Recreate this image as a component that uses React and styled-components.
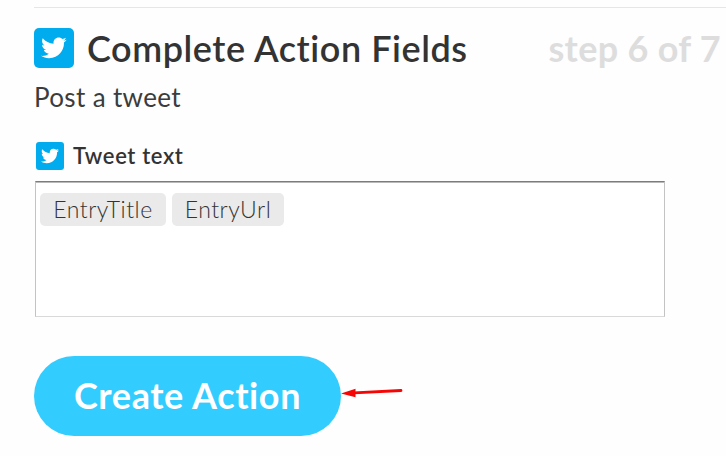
import styled, {createGlobalStyle} from "styled-components";
import {FaTwitter} from "react-icons/fa";

const GlobalStyle = createGlobalStyle`
  * {
    box-sizing: border-box;
  }
  body {
    margin: 0;
    background-color: #fefefe;
    color: #333;
    font-family: Lato, "Open Sans", sans-serif;
    font-variant-ligatures: none;
    overflow: hidden;
  }
`;
const Page = styled.main`
  height: 456px;
  padding: 7px 0 0 34px;
`;
const Header = styled.header`
  display: flex;
  align-items: center;
  border-top: 1px solid #e6e6e6;
  padding: 19px 5px 0 0;
  white-space: nowrap;
`;
const Badge = styled.span`
  display: flex;
  flex-shrink: 0;
  align-items: center;
  justify-content: center;
  width: ${props => props.$size}px;
  height: ${props => props.$size}px;
  border-radius: ${props => props.$size > 30 ? 5 : 3}px;
  background-color: #00aced;
  color: #fff;
  svg {
    width: 64%;
    height: 64%;
  }
`;
const Title = styled.h1`
  margin: 0 0 0 13px;
  font-size: 36px;
  line-height: 42px;
  font-weight: 600;
  letter-spacing: 0.56px;
`;
const Step = styled.span`
  margin-left: auto;
  color: #ddd;
  font-size: 36px;
  line-height: 42px;
  font-weight: 700;
  letter-spacing: 0.3px;
`;
const Subtitle = styled.p`
  margin: 11px 0 0;
  color: #3c3c3c;
  font-size: 26px;
  line-height: 34px;
  font-weight: 400;
  letter-spacing: 0.35px;
`;
const Label = styled.div`
  display: flex;
  align-items: center;
  gap: 9px;
  margin: 27px 0 0 2px;
  font-size: 22px;
  line-height: 30px;
  font-weight: 600;
  letter-spacing: 0.65px;
`;
const TokenField = styled.div`
  display: flex;
  align-items: flex-start;
  gap: 6px;
  width: 630px;
  height: 136px;
  margin: 10px 0 0 1px;
  padding: 11px 4px;
  border: 1px solid #c3c3c3;
  border-top-color: #7c7c7c;
  border-bottom-color: #d9d9d9;
  background-color: #fff;
  box-shadow: inset 0 1px 0 #b9b9b9;
`;
const Token = styled.span`
  width: ${props => props.$width}px;
  height: 33px;
  border-radius: 5px;
  background-color: #eaeaea;
  font-size: 23px;
  line-height: 32px;
  font-weight: 300;
  letter-spacing: 0.5px;
  text-align: center;
`;
const Actions = styled.div`
  display: flex;
  margin-top: 39px;
`;
const Button = styled.button`
  width: 307px;
  height: 80px;
  padding: 0 0 2px;
  border: 0;
  border-radius: 40px;
  background-color: #3cf;
  color: #fff;
  font-family: inherit;
  font-size: 36px;
  line-height: 78px;
  font-weight: 700;
  letter-spacing: 0.6px;
`;
const Arrow = styled.svg`
  width: 64px;
  height: 20px;
  margin-top: 28px;
`;

export default function App() {
  return (
    <>
      <GlobalStyle />
      <Page>
        <Header>
          <Badge $size={40}><FaTwitter /></Badge>
          <Title>Complete Action Fields</Title>
          <Step>step 6 of 7</Step>
        </Header>
        <Subtitle>Post a tweet</Subtitle>
        <Label>
          <Badge $size={28}><FaTwitter /></Badge>
          Tweet text
        </Label>
        <TokenField>
          <Token $width={126}>EntryTitle</Token>
          <Token $width={112}>EntryUrl</Token>
        </TokenField>
        <Actions>
          <Button>Create Action</Button>
          <Arrow viewBox="0 0 64 20">
            <path d="M13 8.8L60 6.5" stroke="#f60505" strokeWidth="2.8" strokeLinecap="round" />
            <path d="M0 9.5L14.5 4.8V13.2Z" fill="#f60505" />
          </Arrow>
        </Actions>
      </Page>
    </>
  );
}
